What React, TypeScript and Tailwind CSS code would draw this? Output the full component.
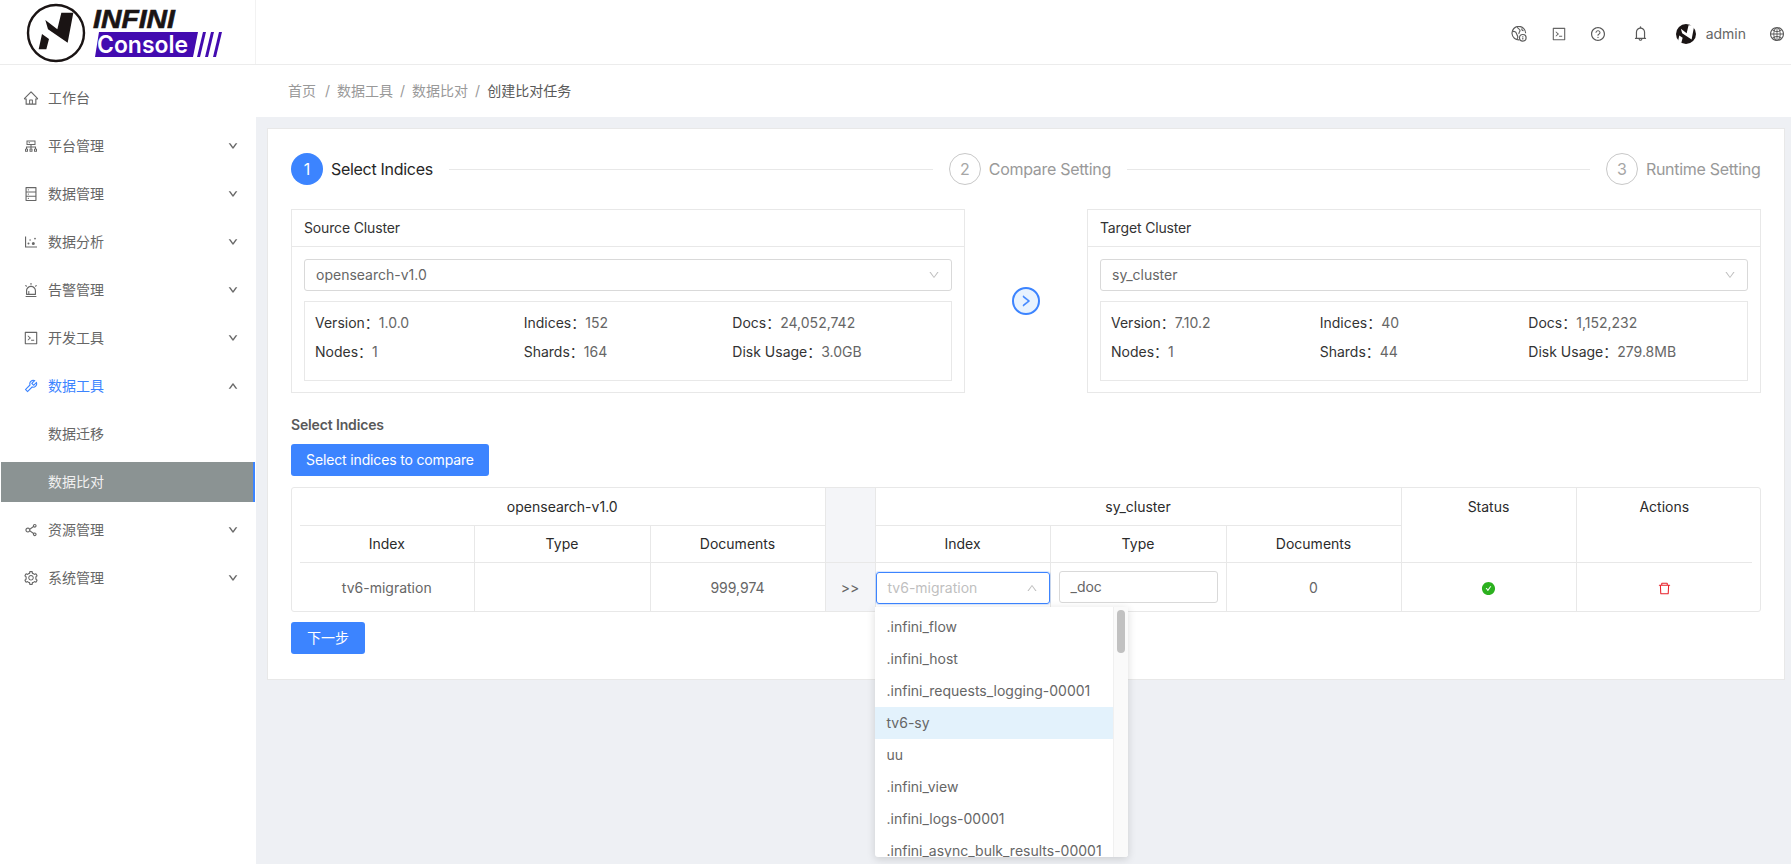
import type { ReactNode } from "react";
import {
  AiOutlineHome,
  AiOutlineCluster,
  AiOutlineDatabase,
  AiOutlineDotChart,
  AiOutlineAlert,
  AiOutlineCode,
  AiOutlineTool,
  AiOutlineShareAlt,
  AiOutlineSetting,
  AiOutlineDown,
  AiOutlineUp,
  AiOutlineRight,
  AiOutlineQuestionCircle,
  AiOutlineBell,
  AiOutlineGlobal,
  AiOutlineDelete,
  AiFillCheckCircle,
} from "react-icons/ai";

const FONT = "font-['Inter','Noto_Sans_CJK_SC',sans-serif]";

const N_MARK = "M76 60 L112 88 L124 38 L160 38 L143 128 L84 88 Z M66 102 L87 117 L79 148 L56 148 Z";

const Logo = () => (
  <svg width="256" height="64" viewBox="0 0 256 64" className="block">
    <circle cx="56" cy="33" r="28" fill="none" stroke="#1a1414" strokeWidth="2.4" />
    <g transform="translate(20 0) scale(0.3333)">
      <path d={N_MARK} fill="#1a1414" />
    </g>
    <text
      x="93"
      y="28"
      textLength="82"
      lengthAdjust="spacingAndGlyphs"
      fill="#1a1414"
      stroke="#1a1414"
      strokeWidth="0.6"
      fontFamily="Liberation Sans, sans-serif"
      fontWeight="700"
      fontStyle="italic"
      fontSize="26"
    >
      INFINI
    </text>
    <polygon points="99,32 198,32 193,57 95,57" fill="#430bb0" />
    <polygon points="203,32 206,32 200,57 197,57" fill="#430bb0" />
    <polygon points="211,32 214,32 208,57 205,57" fill="#430bb0" />
    <polygon points="219,32 222,32 216,57 213,57" fill="#430bb0" />
    <text
      x="97"
      y="53"
      textLength="91"
      lengthAdjust="spacingAndGlyphs"
      fill="#fff"
      fontFamily="Inter, sans-serif"
      fontWeight="600"
      fontSize="24"
    >
      Console
    </text>
  </svg>
);

// globe with a small info badge, top bar first icon
const GlobeBadge = () => (
  <svg width="16" height="16" viewBox="0 0 16 16" fill="none" stroke="#5c5c5c" strokeWidth="1.15">
    <path d="M8.4 13.9A6.8 6.8 0 1 1 14.6 7.2" />
    <path d="M1.4 5.6C3.6 5 5 5.8 5.4 7.4S6.8 9.6 6.8 11 5.6 13 5.6 14" />
    <path d="M6.4 1.2C6.8 2.8 8.8 3 9 4.4S7.4 6.4 8 8" />
    <path d="M11 2.4C10.6 3.6 11 4.6 12.6 4.8" />
    <circle cx="11.8" cy="11.8" r="3.3" />
    <path d="M11.8 10.2v.7M11.8 11.6v1.9" />
  </svg>
);

const Avatar = () => (
  <svg width="20" height="20" viewBox="0 0 20 20">
    <circle cx="10" cy="10" r="10" fill="#1a1414" />
    <g transform="translate(-7.28 -4.88) scale(0.16)">
      <path d={N_MARK} fill="#fff" />
    </g>
  </svg>
);

type MenuItem = { icon?: ReactNode; label: string; arrow?: "down" | "up"; active?: boolean; selected?: boolean };

const menu: MenuItem[] = [
  { icon: <AiOutlineHome size={16} />, label: "工作台" },
  { icon: <AiOutlineCluster size={16} />, label: "平台管理", arrow: "down" },
  { icon: <AiOutlineDatabase size={16} />, label: "数据管理", arrow: "down" },
  { icon: <AiOutlineDotChart size={16} />, label: "数据分析", arrow: "down" },
  { icon: <AiOutlineAlert size={16} />, label: "告警管理", arrow: "down" },
  { icon: <AiOutlineCode size={16} />, label: "开发工具", arrow: "down" },
  { icon: <AiOutlineTool size={16} />, label: "数据工具", arrow: "up", active: true },
  { label: "数据迁移" },
  { label: "数据比对", selected: true },
  { icon: <AiOutlineShareAlt size={16} />, label: "资源管理", arrow: "down" },
  { icon: <AiOutlineSetting size={16} />, label: "系统管理", arrow: "down" },
];

const Sidebar = () => (
  <aside className="w-[256px] shrink-0 bg-white px-px pt-[13px]">
    {menu.map((m) => (
      <div
        key={m.label}
        className={`mb-2 flex h-10 items-center pl-[22px] pr-[17px] text-sm ${
          m.selected
            ? "border-r-2 border-[#3c84ff] bg-[#8b9393] text-[#f0f0f0]"
            : m.active
              ? "text-[#3c84ff]"
              : "text-[#666666]"
        }`}
      >
        <span className="flex w-[25px] shrink-0 items-center">{m.icon}</span>
        <span className="flex-1">{m.label}</span>
        {m.arrow === "down" && <AiOutlineDown size={10} className="stroke-[60] text-[#555555]" />}
        {m.arrow === "up" && <AiOutlineUp size={10} className="stroke-[60] text-[#555555]" />}
      </div>
    ))}
  </aside>
);

const Header = () => (
  <header className="flex h-[65px] border-b border-[#ececec] bg-white">
    <div className="w-[256px] shrink-0 border-r border-[#f2f2f2]">
      <Logo />
    </div>
    <div className="flex flex-1 items-center justify-end pt-[3px] text-[#595959]">
      <span className="mr-[24px] flex"><GlobeBadge /></span>
      <AiOutlineCode size={16} className="mr-[23px] text-[#666666]" />
      <AiOutlineQuestionCircle size={16} className="mr-[26px]" />
      <AiOutlineBell size={17} className="mr-[27px]" />
      <span className="mr-[10px] flex"><Avatar /></span>
      <span className="mr-[23px] text-sm text-[#666666]">admin</span>
      <AiOutlineGlobal size={16} className="mr-[6px]" />
    </div>
  </header>
);

const Breadcrumb = () => (
  <div className="flex h-[52px] items-center bg-white pl-[32px] text-sm text-[#999999]">
    <span className="mr-[2px]">首页</span>
    <span className="mx-[7px]">/</span>
    <span>数据工具</span>
    <span className="mx-[7px]">/</span>
    <span>数据比对</span>
    <span className="mx-[7px]">/</span>
    <span className="text-[#595959]">创建比对任务</span>
  </div>
);

const Step = ({ n, label, active }: { n: number; label: string; active?: boolean }) => (
  <div className="flex shrink-0 items-center whitespace-nowrap">
    <div
      className={`flex h-8 w-8 items-center justify-center rounded-full text-base ${
        active ? "bg-[#3c84ff] text-white" : "border border-[#c8c8c8] text-[#a6a6a6]"
      }`}
    >
      {n}
    </div>
    <span className={`ml-2 text-base tracking-[-0.3px] ${active ? "text-[#262626]" : "text-[#999999]"}`}>{label}</span>
  </div>
);

type Info = { label: string; value: string };

const ClusterPanel = ({ title, cluster, stats }: { title: string; cluster: string; stats: Info[] }) => (
  <div className="w-[674px] border border-[#e8e8e8]">
    <div className="flex h-[37px] items-center border-b border-[#e8e8e8] px-3 text-sm tracking-[-0.15px] text-[#333333]">{title}</div>
    <div className="p-3 pb-[11px]">
      <div className="flex h-8 items-center justify-between rounded-[3px] border border-[#d9d9d9] pl-[11px] pr-[11px] text-sm text-[#666666]">
        <span>{cluster}</span>
        <AiOutlineDown size={12} className="text-[#bfbfbf]" />
      </div>
      <div className="mt-[10px] grid h-[80px] grid-cols-3 content-start gap-y-[7px] border border-[#e8e8e8] px-[10px] pt-[10px]">
        {stats.map((s) => (
          <div key={s.label} className="h-[22px] text-sm leading-[22px] text-[#666666]">
            <span className="text-[#333333]">{s.label}：</span>
            {s.value}
          </div>
        ))}
      </div>
    </div>
  </div>
);

const dropdownItems = [
  ".infini_flow",
  ".infini_host",
  ".infini_requests_logging-00001",
  "tv6-sy",
  "uu",
  ".infini_view",
  ".infini_logs-00001",
  ".infini_async_bulk_results-00001",
];

const IndexDropdown = () => (
  <div className="absolute left-[-1px] top-[35px] z-10 flex h-[250px] w-[253px] overflow-hidden rounded-b-[3px] bg-white shadow-[0_2px_8px_rgba(0,0,0,0.15)]">
    <div className="w-[238px] shrink-0 pt-[4px]">
      {dropdownItems.map((item) => (
        <div
          key={item}
          className={`flex h-8 items-center whitespace-nowrap pl-[12px] text-left text-sm text-[#666666] ${
            item === "tv6-sy" ? "bg-[#e3f2fc]" : ""
          }`}
        >
          {item}
        </div>
      ))}
    </div>
    <div className="flex-1 border-l border-[#f0f0f0] bg-[#fafafa] pl-[3px] pt-[3px]">
      <div className="h-[43px] w-2 rounded-full bg-[#c1c1c1]" />
    </div>
  </div>
);

const th = "h-[37px] border-b border-[#e8e8e8] pt-px text-center align-middle text-sm font-normal text-[#2b2b2b]";
const thv = "border-r border-[#e8e8e8]";
const td = "pt-[3px] text-center align-middle text-sm font-normal text-[#666666]";

const IndexTable = () => (
  <div className="rounded-[3px] border border-[#e8e8e8] px-2">
    <table className="w-full table-fixed border-collapse">
      <colgroup>
        <col className="w-[174px]" />
        <col className="w-[176px]" />
        <col className="w-[175px]" />
        <col className="w-[50px]" />
        <col className="w-[175px]" />
        <col className="w-[176px]" />
        <col className="w-[175px]" />
        <col className="w-[175px]" />
        <col className="w-[176px]" />
      </colgroup>
      <thead>
        <tr>
          <th colSpan={3} className={`${th}`}>opensearch-v1.0</th>
          <th rowSpan={2} className="border-x border-b border-[#e8e8e8] bg-[#f4f5f8]" />
          <th colSpan={3} className={`${th} ${thv}`}>sy_cluster</th>
          <th rowSpan={2} className={`${th} ${thv} !pt-[9px] !align-top`}>Status</th>
          <th rowSpan={2} className={`${th} !pt-[9px] !align-top`}>Actions</th>
        </tr>
        <tr>
          <th className={`${th} ${thv}`}>Index</th>
          <th className={`${th} ${thv}`}>Type</th>
          <th className={`${th}`}>Documents</th>
          <th className={`${th} ${thv}`}>Index</th>
          <th className={`${th} ${thv}`}>Type</th>
          <th className={`${th} ${thv}`}>Documents</th>
        </tr>
      </thead>
      <tbody>
        <tr className="h-[49px]">
          <td className={`${td} ${thv}`}>tv6-migration</td>
          <td className={`${td} ${thv}`} />
          <td className={`${td}`}>999,974</td>
          <td className="border-x border-[#e8e8e8] bg-[#f4f5f8] pt-[3px] text-center text-sm text-[#666666]">&gt;&gt;</td>
          <td className={`${td} ${thv}`}>
            <div className="relative">
              <div className="flex h-8 items-center justify-between rounded-[3px] border border-[#3c84ff] pl-[11px] pr-[11px] shadow-[0_0_0_1px_rgba(60,132,255,0.18)]">
                <span className="text-[#bfbfbf]">tv6-migration</span>
                <AiOutlineUp size={12} className="text-[#bfbfbf]" />
              </div>
              <IndexDropdown />
            </div>
          </td>
          <td className={`${td} ${thv} px-2`}>
            <div className="mb-[2px] flex h-8 items-center rounded-[3px] border border-[#d9d9d9] pl-[11px] text-[#666666]">_doc</div>
          </td>
          <td className={`${td} ${thv}`}>0</td>
          <td className={`${td} ${thv}`}>
            <AiFillCheckCircle size={15} className="mx-auto text-[#2cb11f]" />
          </td>
          <td className={td}>
            <AiOutlineDelete size={15} className="mx-auto text-[#e8202a]" />
          </td>
        </tr>
      </tbody>
    </table>
  </div>
);

export default function App() {
  return (
    <div className={`flex h-screen flex-col overflow-hidden bg-[#eef0f4] ${FONT}`}>
      <Header />
      <div className="flex min-h-0 flex-1">
        <Sidebar />
        <main className="min-w-0 flex-1">
          <Breadcrumb />
          <div className="ml-[11px] mr-[6px] mt-[11px] h-[552px] border border-[#e8e8e8] bg-white px-[23px] pt-[24px]">
            <div className="flex items-center">
              <Step n={1} label="Select Indices" active />
              <div className="mx-4 h-px w-[484px] shrink-0 bg-[#e8e8e8]" />
              <Step n={2} label="Compare Setting" />
              <div className="mx-4 h-px w-[463px] shrink-0 bg-[#e8e8e8]" />
              <Step n={3} label="Runtime Setting" />
            </div>
            <div className="mt-[24px] flex items-center justify-between">
              <ClusterPanel
                title="Source Cluster"
                cluster="opensearch-v1.0"
                stats={[
                  { label: "Version", value: "1.0.0" },
                  { label: "Indices", value: "152" },
                  { label: "Docs", value: "24,052,742" },
                  { label: "Nodes", value: "1" },
                  { label: "Shards", value: "164" },
                  { label: "Disk Usage", value: "3.0GB" },
                ]}
              />
              <div className="flex h-7 w-7 items-center justify-center rounded-full border-2 border-[#3c84ff] bg-[#e8f3ff] text-[#3c84ff]">
                <AiOutlineRight size={14} className="stroke-[40]" />
              </div>
              <ClusterPanel
                title="Target Cluster"
                cluster="sy_cluster"
                stats={[
                  { label: "Version", value: "7.10.2" },
                  { label: "Indices", value: "40" },
                  { label: "Docs", value: "1,152,232" },
                  { label: "Nodes", value: "1" },
                  { label: "Shards", value: "44" },
                  { label: "Disk Usage", value: "279.8MB" },
                ]}
              />
            </div>
            <div className="mt-[21px] text-sm font-semibold leading-[22px] tracking-[-0.15px] text-[#595959]">Select Indices</div>
            <button className="mt-[8px] block h-8 w-[198px] rounded-[3px] bg-[#3c84ff] text-sm tracking-[-0.15px] text-white">
              Select indices to compare
            </button>
            <div className="mt-[11px]">
              <IndexTable />
            </div>
            <button className="mt-[10px] block h-8 w-[74px] rounded-[3px] bg-[#3c84ff] text-sm text-white">下一步</button>
          </div>
        </main>
      </div>
    </div>
  );
}
